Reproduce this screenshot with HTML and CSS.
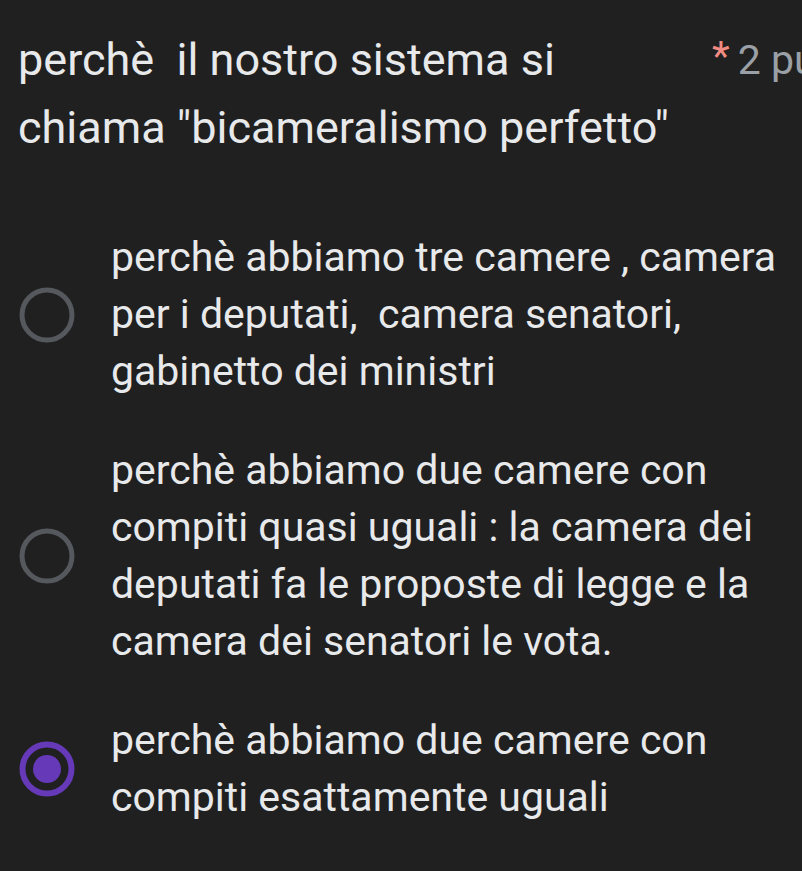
FILE: index.html
```html
<!DOCTYPE html>
<html lang="it">
<head>
<meta charset="utf-8">
<link rel="stylesheet" href="styles.css">
</head>
<body>
<div class="page">
  <div class="header">
    <div class="title">perchè&nbsp; il nostro sistema si<br>chiama "bicameralismo perfetto"</div>
    <div class="meta"><span class="req">*</span><span class="points">2 punti</span></div>
  </div>
  <div class="options">
    <div class="option">
      <svg class="radio" viewBox="0 0 56 56" width="56" height="56"><circle cx="28" cy="28" r="25" fill="none" stroke="#55585d" stroke-width="5"/></svg>
      <div class="label">perchè abbiamo tre camere , camera<br>per i deputati,&nbsp; camera senatori,<br>gabinetto dei ministri</div>
    </div>
    <div class="option">
      <svg class="radio" viewBox="0 0 56 56" width="56" height="56"><circle cx="28" cy="28" r="25" fill="none" stroke="#55585d" stroke-width="5"/></svg>
      <div class="label">perchè abbiamo due camere con<br>compiti quasi uguali : la camera dei<br>deputati fa le proposte di legge e la<br>camera dei senatori le vota.</div>
    </div>
    <div class="option">
      <svg class="radio" viewBox="0 0 56 56" width="56" height="56"><circle cx="28" cy="28" r="24.5" fill="none" stroke="#6539b8" stroke-width="6"/><circle cx="28" cy="28" r="14" fill="#6539b8"/></svg>
      <div class="label">perchè abbiamo due camere con<br>compiti esattamente uguali</div>
    </div>
  </div>
</div>
</body>
</html>
```
FILE: styles.css
```css
html, body {
  margin: 0;
  padding: 0;
  background: #202021;
  overflow: hidden;
}
.page {
  width: 802px;
  height: 871px;
  overflow: hidden;
  font-family: Roboto, "Noto Sans", sans-serif;
  color: #e8e9eb;
}
.header {
  display: flex;
  padding: 26px 0 0 18px;
}
.title {
  width: 694px;
  flex: none;
  font-size: 45px;
  line-height: 68px;
  white-space: nowrap;
}
.meta {
  flex: none;
  display: flex;
  font-size: 41px;
  line-height: 68px;
  white-space: nowrap;
}
.req {
  color: #f28b82;
  margin-right: 8px;
  position: relative;
  top: -4px;
}
.points {
  color: #9aa0a6;
}
.options {
  display: flex;
  flex-direction: column;
  gap: 42px;
  margin-top: 67px;
}
.option {
  display: flex;
  align-items: center;
  padding-left: 19px;
}
.radio {
  flex: none;
  margin-right: 36px;
}
.label {
  font-size: 41px;
  line-height: 57px;
  white-space: nowrap;
}
```
